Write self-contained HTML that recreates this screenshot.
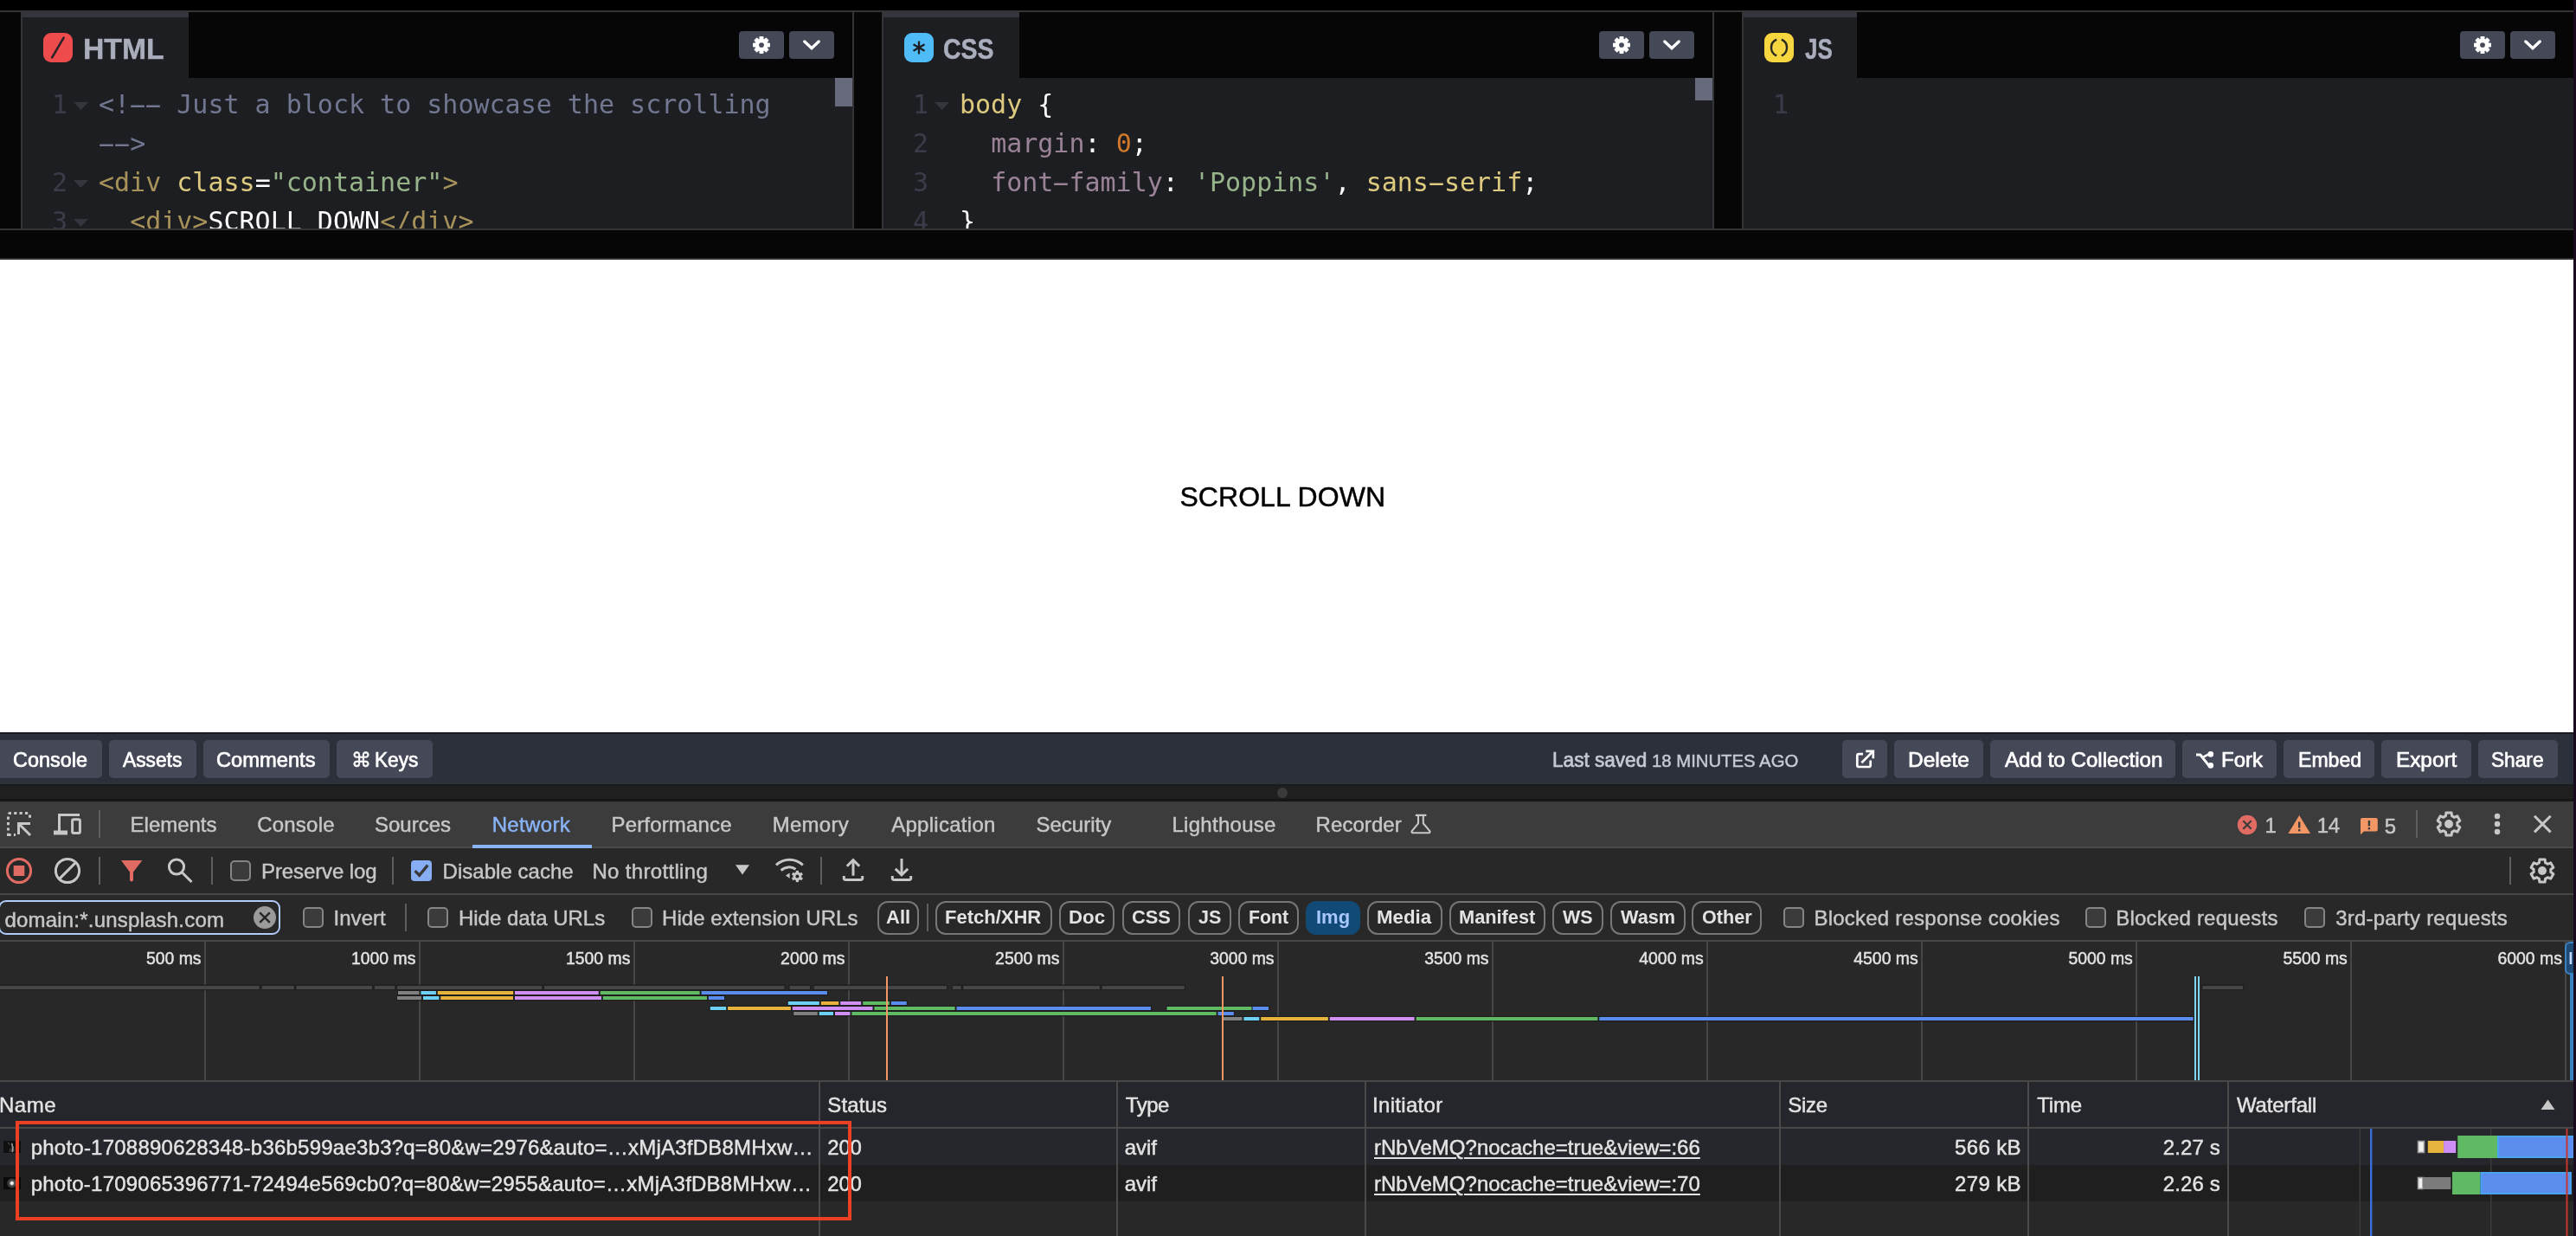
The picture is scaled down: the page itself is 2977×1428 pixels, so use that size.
<!DOCTYPE html>
<html lang="en"><head><meta charset="utf-8"><title>CodePen - Network</title>
<style>

html,body{margin:0;padding:0}
body{width:2977px;height:1428px;position:relative;overflow:hidden;background:#060606;font-family:"Liberation Sans",sans-serif}
#root{position:absolute;left:0;top:0;width:2977px;height:1428px;will-change:transform}
.b{position:absolute}
.t{position:absolute;white-space:pre;line-height:1;-webkit-text-stroke:0.45px}
svg{position:absolute;overflow:visible}
.code{position:absolute;font-family:"DejaVu Sans Mono","Liberation Mono",monospace;font-size:30px;line-height:45px;white-space:pre;color:#fff}
.ln{position:absolute;font-family:"DejaVu Sans Mono","Liberation Mono",monospace;font-size:30px;line-height:45px;color:#3a3d49;text-align:right;width:40px}
.hy{display:inline-block;transform:scaleX(2.05)}
.c-com{color:#717790}.c-tag{color:#a7925a}.c-att{color:#ddca7e}.c-str{color:#96b38a}.c-pro{color:#9a8297}.c-num{color:#d0782a}
.btn{position:absolute;background:#444857;border-radius:4px}
.chip{position:absolute;box-sizing:border-box;border:2px solid #777;border-radius:12px;top:1041px;height:39px}
.cb{position:absolute;box-sizing:border-box;width:24px;height:24px;border:2px solid #858585;border-radius:5px;background:#3b3b3b}

</style></head>
<body>
<div id="root">
<div class="b" style="left:0px;top:0px;width:2977px;height:12px;background:#000;"></div>
<div class="b" style="left:0px;top:12px;width:2974px;height:2px;background:#343436;"></div>
<div class="b" style="left:26px;top:90px;width:959px;height:174px;background:#1d1e22;"></div>
<div class="b" style="left:26px;top:14px;width:192px;height:76px;background:#1d1e22;"></div>
<div class="b" style="left:26px;top:14px;width:192px;height:6px;background:#34363e;"></div>
<div class="b" style="left:50px;top:38px;width:34px;height:34px;background:#ee4c4c;border-radius:9px"></div>
<div class="btn" style="left:912px;top:36px;width:52px;height:32px"></div>
<div class="btn" style="left:854px;top:36px;width:52px;height:32px"></div>
<svg style="left:926px;top:44px" width="24" height="16" viewBox="0 0 24 16"><path d="M3.8 4 L12 11.7 L20.2 4" fill="none" stroke="#fff" stroke-width="3.4" stroke-linecap="round" stroke-linejoin="miter"/></svg>
<svg style="left:869px;top:41px" width="22" height="22" viewBox="-11.5 -11.5 23 23"><g fill="#fff"><rect x="-2.6" y="-10.4" width="5.2" height="6" rx="0.8" transform="rotate(0)"/><rect x="-2.6" y="-10.4" width="5.2" height="6" rx="0.8" transform="rotate(45)"/><rect x="-2.6" y="-10.4" width="5.2" height="6" rx="0.8" transform="rotate(90)"/><rect x="-2.6" y="-10.4" width="5.2" height="6" rx="0.8" transform="rotate(135)"/><rect x="-2.6" y="-10.4" width="5.2" height="6" rx="0.8" transform="rotate(180)"/><rect x="-2.6" y="-10.4" width="5.2" height="6" rx="0.8" transform="rotate(225)"/><rect x="-2.6" y="-10.4" width="5.2" height="6" rx="0.8" transform="rotate(270)"/><rect x="-2.6" y="-10.4" width="5.2" height="6" rx="0.8" transform="rotate(315)"/><circle r="7.6"/></g><circle r="3" fill="#444857"/></svg>
<div class="b" style="left:1021px;top:90px;width:958px;height:174px;background:#1d1e22;"></div>
<div class="b" style="left:1021px;top:14px;width:157px;height:76px;background:#1d1e22;"></div>
<div class="b" style="left:1021px;top:14px;width:157px;height:6px;background:#34363e;"></div>
<div class="b" style="left:1045px;top:38px;width:34px;height:34px;background:#4fbcf7;border-radius:9px"></div>
<div class="btn" style="left:1906px;top:36px;width:52px;height:32px"></div>
<div class="btn" style="left:1848px;top:36px;width:52px;height:32px"></div>
<svg style="left:1920px;top:44px" width="24" height="16" viewBox="0 0 24 16"><path d="M3.8 4 L12 11.7 L20.2 4" fill="none" stroke="#fff" stroke-width="3.4" stroke-linecap="round" stroke-linejoin="miter"/></svg>
<svg style="left:1863px;top:41px" width="22" height="22" viewBox="-11.5 -11.5 23 23"><g fill="#fff"><rect x="-2.6" y="-10.4" width="5.2" height="6" rx="0.8" transform="rotate(0)"/><rect x="-2.6" y="-10.4" width="5.2" height="6" rx="0.8" transform="rotate(45)"/><rect x="-2.6" y="-10.4" width="5.2" height="6" rx="0.8" transform="rotate(90)"/><rect x="-2.6" y="-10.4" width="5.2" height="6" rx="0.8" transform="rotate(135)"/><rect x="-2.6" y="-10.4" width="5.2" height="6" rx="0.8" transform="rotate(180)"/><rect x="-2.6" y="-10.4" width="5.2" height="6" rx="0.8" transform="rotate(225)"/><rect x="-2.6" y="-10.4" width="5.2" height="6" rx="0.8" transform="rotate(270)"/><rect x="-2.6" y="-10.4" width="5.2" height="6" rx="0.8" transform="rotate(315)"/><circle r="7.6"/></g><circle r="3" fill="#444857"/></svg>
<div class="b" style="left:2015px;top:90px;width:959px;height:174px;background:#1d1e22;"></div>
<div class="b" style="left:2015px;top:14px;width:131px;height:76px;background:#1d1e22;"></div>
<div class="b" style="left:2015px;top:14px;width:131px;height:6px;background:#34363e;"></div>
<div class="b" style="left:2039px;top:38px;width:34px;height:34px;background:#f8d640;border-radius:9px"></div>
<div class="btn" style="left:2901px;top:36px;width:52px;height:32px"></div>
<div class="btn" style="left:2843px;top:36px;width:52px;height:32px"></div>
<svg style="left:2915px;top:44px" width="24" height="16" viewBox="0 0 24 16"><path d="M3.8 4 L12 11.7 L20.2 4" fill="none" stroke="#fff" stroke-width="3.4" stroke-linecap="round" stroke-linejoin="miter"/></svg>
<svg style="left:2858px;top:41px" width="22" height="22" viewBox="-11.5 -11.5 23 23"><g fill="#fff"><rect x="-2.6" y="-10.4" width="5.2" height="6" rx="0.8" transform="rotate(0)"/><rect x="-2.6" y="-10.4" width="5.2" height="6" rx="0.8" transform="rotate(45)"/><rect x="-2.6" y="-10.4" width="5.2" height="6" rx="0.8" transform="rotate(90)"/><rect x="-2.6" y="-10.4" width="5.2" height="6" rx="0.8" transform="rotate(135)"/><rect x="-2.6" y="-10.4" width="5.2" height="6" rx="0.8" transform="rotate(180)"/><rect x="-2.6" y="-10.4" width="5.2" height="6" rx="0.8" transform="rotate(225)"/><rect x="-2.6" y="-10.4" width="5.2" height="6" rx="0.8" transform="rotate(270)"/><rect x="-2.6" y="-10.4" width="5.2" height="6" rx="0.8" transform="rotate(315)"/><circle r="7.6"/></g><circle r="3" fill="#444857"/></svg>
<div class="b" style="left:24px;top:14px;width:2px;height:250px;background:#343436;"></div>
<div class="b" style="left:985px;top:14px;width:2px;height:250px;background:#343436;"></div>
<div class="b" style="left:1019px;top:14px;width:2px;height:250px;background:#343436;"></div>
<div class="b" style="left:1979px;top:14px;width:2px;height:250px;background:#343436;"></div>
<div class="b" style="left:2013px;top:14px;width:2px;height:250px;background:#343436;"></div>
<div class="b" style="left:0px;top:264px;width:2974px;height:2px;background:#343436;"></div>
<div class="b" style="left:0px;top:298px;width:2974px;height:2px;background:#2e2e30;"></div>
<div class="b" style="left:965px;top:90px;width:20px;height:33px;background:#666a7c;"></div>
<div class="b" style="left:1959px;top:90px;width:20px;height:26px;background:#666a7c;"></div>
<span class="t" style="left:95.6px;top:39.8px;font-size:33.5px;color:#aaaebc;font-weight:700;transform:scaleX(1.0067);transform-origin:0 0;">HTML</span>
<span class="t" style="left:1089.6px;top:39.8px;font-size:33.5px;color:#aaaebc;font-weight:700;transform:scaleX(0.8507);transform-origin:0 0;">CSS</span>
<span class="t" style="left:2086.0px;top:39.8px;font-size:33.5px;color:#aaaebc;font-weight:700;transform:scaleX(0.7750);transform-origin:0 0;">JS</span>
<svg style="left:50px;top:38px" width="34" height="34" viewBox="0 0 34 34"><path d="M10.2 28.4 L23.6 5.6" stroke="#2a2226" stroke-width="2.6" stroke-linecap="round"/></svg>
<svg style="left:1045px;top:38px" width="34" height="34" viewBox="0 0 34 34"><g stroke="#1d1e22" stroke-width="2.3" stroke-linecap="butt"><path d="M17 9.5V24.5"/><path d="M10.5 13.25L23.5 20.75"/><path d="M23.5 13.25L10.5 20.75"/></g></svg>
<svg style="left:2039px;top:38px" width="34" height="34" viewBox="0 0 34 34"><g fill="none" stroke="#2b2a22" stroke-width="2.4"><path d="M14.2 7.6 A10.2 10.2 0 0 0 14.2 26.4"/><path d="M19.8 7.6 A10.2 10.2 0 0 1 19.8 26.4"/></g></svg>
<div class="b" style="left:26px;top:90px;width:939px;height:174px;overflow:hidden"><div class="code" style="left:88px;top:8px"><span class="c-com">&lt;!<span class="hy">-</span><span class="hy">-</span> Just a block to showcase the scrolling</span></div><div class="code" style="left:88px;top:53px"><span class="c-com"><span class="hy">-</span><span class="hy">-</span>&gt;</span></div><div class="code" style="left:88px;top:98px"><span class="c-tag">&lt;div</span> <span class="c-att">class</span>=<span class="c-str">"container"</span><span class="c-tag">&gt;</span></div><div class="code" style="left:88px;top:143px">  <span class="c-tag">&lt;div&gt;</span>SCROLL DOWN<span class="c-tag">&lt;/div&gt;</span></div><div class="ln" style="left:12px;top:8px">1</div><div class="ln" style="left:12px;top:98px">2</div><div class="ln" style="left:12px;top:143px">3</div><svg style="left:59.2px;top:28.3px" width="17" height="9" viewBox="0 0 17 9"><path d="M0 0H17L8.5 9Z" fill="#34363e"/></svg><svg style="left:59.2px;top:118.3px" width="17" height="9" viewBox="0 0 17 9"><path d="M0 0H17L8.5 9Z" fill="#34363e"/></svg><svg style="left:59.2px;top:163.3px" width="17" height="9" viewBox="0 0 17 9"><path d="M0 0H17L8.5 9Z" fill="#34363e"/></svg></div>
<div class="b" style="left:1021px;top:90px;width:938px;height:174px;overflow:hidden"><div class="code" style="left:88px;top:8px"><span class="c-att">body</span> {</div><div class="code" style="left:88px;top:53px">  <span class="c-pro">margin</span>: <span class="c-num">0</span>;</div><div class="code" style="left:88px;top:98px">  <span class="c-pro">font<span class="hy">-</span>family</span>: <span class="c-str">'Poppins'</span>, <span class="c-att">sans<span class="hy">-</span>serif</span>;</div><div class="code" style="left:88px;top:143px">}</div><div class="ln" style="left:12px;top:8px">1</div><div class="ln" style="left:12px;top:53px">2</div><div class="ln" style="left:12px;top:98px">3</div><div class="ln" style="left:12px;top:143px">4</div><svg style="left:59.2px;top:28.3px" width="17" height="9" viewBox="0 0 17 9"><path d="M0 0H17L8.5 9Z" fill="#34363e"/></svg></div>
<div class="b" style="left:2015px;top:90px;width:959px;height:174px;overflow:hidden"><div class="ln" style="left:12px;top:8px">1</div></div>
<div class="b" style="left:0px;top:300px;width:2974px;height:546px;background:#fff;"></div>
<span class="t" style="left:1363.4px;top:557.9px;font-size:32px;color:#000;letter-spacing:0.060px;">SCROLL DOWN</span>
<div class="b" style="left:0px;top:846px;width:2974px;height:2px;background:#1b1c22;"></div>
<div class="b" style="left:0px;top:848px;width:2974px;height:58px;background:#2c303a;"></div>
<div class="b" style="left:0px;top:906px;width:2974px;height:2px;background:#191a1d;"></div>
<div class="b" style="left:0px;top:908px;width:2974px;height:15px;background:#1f1f1f;"></div>
<div class="b" style="left:0px;top:923px;width:2974px;height:3px;background:#161616;"></div>
<div class="b" style="left:1476px;top:910px;width:12px;height:12px;background:#3a3a3a;border-radius:50%"></div>
<div class="btn" style="left:0px;top:855px;width:118px;height:44px;border-radius:0 5px 5px 0"></div>
<span class="t" style="left:15.3px;top:865.7px;font-size:24px;color:#fff;transform:scaleX(0.9770);transform-origin:0 0;-webkit-text-stroke:0.7px;">Console</span>
<div class="btn" style="left:126px;top:855px;width:101px;height:44px;border-radius:5px"></div>
<span class="t" style="left:142.0px;top:865.7px;font-size:24px;color:#fff;transform:scaleX(0.9486);transform-origin:0 0;-webkit-text-stroke:0.7px;">Assets</span>
<div class="btn" style="left:235px;top:855px;width:146px;height:44px;border-radius:5px"></div>
<span class="t" style="left:250.0px;top:865.7px;font-size:24px;color:#fff;transform:scaleX(0.9870);transform-origin:0 0;-webkit-text-stroke:0.7px;">Comments</span>
<div class="btn" style="left:389px;top:855px;width:111px;height:44px;border-radius:5px"></div>
<div class="btn" style="left:2129px;top:855px;width:52px;height:44px;border-radius:5px"></div>
<div class="btn" style="left:2189px;top:855px;width:103px;height:44px;border-radius:5px"></div>
<span class="t" style="left:2205.3px;top:865.7px;font-size:24px;color:#fff;transform:scaleX(1.0206);transform-origin:0 0;-webkit-text-stroke:0.7px;">Delete</span>
<div class="btn" style="left:2300px;top:855px;width:214px;height:44px;border-radius:5px"></div>
<span class="t" style="left:2317.0px;top:865.7px;font-size:24px;color:#fff;transform:scaleX(1.0056);transform-origin:0 0;-webkit-text-stroke:0.7px;">Add to Collection</span>
<div class="btn" style="left:2522px;top:855px;width:109px;height:44px;border-radius:5px"></div>
<div class="btn" style="left:2639px;top:855px;width:105px;height:44px;border-radius:5px"></div>
<span class="t" style="left:2655.5px;top:865.7px;font-size:24px;color:#fff;transform:scaleX(0.9608);transform-origin:0 0;-webkit-text-stroke:0.7px;">Embed</span>
<div class="btn" style="left:2752px;top:855px;width:104px;height:44px;border-radius:5px"></div>
<span class="t" style="left:2768.5px;top:865.7px;font-size:24px;color:#fff;transform:scaleX(1.0130);transform-origin:0 0;-webkit-text-stroke:0.7px;">Export</span>
<div class="btn" style="left:2864px;top:855px;width:92px;height:44px;border-radius:5px"></div>
<span class="t" style="left:2879.1px;top:865.7px;font-size:24px;color:#fff;transform:scaleX(0.9444);transform-origin:0 0;-webkit-text-stroke:0.7px;">Share</span>
<span class="t" style="left:406.0px;top:867.1px;font-size:23px;color:#fff;font-family:'DejaVu Sans', 'Liberation Sans', sans-serif;">⌘</span>
<span class="t" style="left:433.4px;top:865.7px;font-size:24px;color:#fff;transform:scaleX(0.9423);transform-origin:0 0;-webkit-text-stroke:0.7px;">Keys</span>
<span class="t" style="left:2567.0px;top:865.7px;font-size:24px;color:#fff;-webkit-text-stroke:0.7px;">Fork</span>
<span class="t" style="left:1794.1px;top:865.7px;font-size:24px;color:#c7c9d3;transform:scaleX(0.9412);transform-origin:0 0;-webkit-text-stroke:0.7px;">Last saved</span>
<span class="t" style="left:1909.0px;top:869.1px;font-size:20px;color:#c7c9d3;transform:scaleX(1.0152);transform-origin:0 0;">18 MINUTES AGO</span>
<svg style="left:0;top:0" width="2977" height="1428" viewBox="0 0 2977 1428"><g fill="none" stroke="#fff" stroke-width="2.7"><path d="M2153 871.1 H2148.3 a2 2 0 0 0 -2 2 V884 a2 2 0 0 0 2 2 H2159.7 a2 2 0 0 0 2 -2 V878.5"/><path d="M2151.4 881.2 L2164.2 868.4"/><path d="M2156.3 867.9 H2164.8 V876.2"/><path d="M2538 872 H2542.8 L2552.8 884.6" stroke-width="3" stroke-linejoin="round"/><path d="M2546.3 874.7 L2552.5 871.3" stroke-width="2.6"/></g><circle cx="2554.8" cy="871.4" r="3.3" fill="#fff"/><circle cx="2554.8" cy="884.4" r="3.3" fill="#fff"/></svg>
<div class="b" style="left:0px;top:926px;width:2974px;height:52px;background:#3c3c3c;"></div>
<div class="b" style="left:0px;top:978px;width:2974px;height:2px;background:#494949;"></div>
<div class="b" style="left:0px;top:980px;width:2974px;height:448px;background:#282828;"></div>
<div class="b" style="left:0px;top:1032px;width:2974px;height:2px;background:#474747;"></div>
<div class="b" style="left:0px;top:1086px;width:2974px;height:2px;background:#474747;"></div>
<div class="b" style="left:0px;top:1248px;width:2974px;height:2px;background:#474747;"></div>
<span class="t" style="left:150.6px;top:941.0px;font-size:24px;color:#c7c7c7;letter-spacing:-0.029px;">Elements</span>
<span class="t" style="left:297.2px;top:941.0px;font-size:24px;color:#c7c7c7;letter-spacing:0.217px;">Console</span>
<span class="t" style="left:433.0px;top:941.0px;font-size:24px;color:#c7c7c7;">Sources</span>
<span class="t" style="left:568.7px;top:941.0px;font-size:24px;color:#8ab4f8;letter-spacing:0.350px;">Network</span>
<span class="t" style="left:706.5px;top:941.0px;font-size:24px;color:#c7c7c7;letter-spacing:0.160px;">Performance</span>
<span class="t" style="left:892.8px;top:941.0px;font-size:24px;color:#c7c7c7;letter-spacing:0.240px;">Memory</span>
<span class="t" style="left:1030.2px;top:941.0px;font-size:24px;color:#c7c7c7;letter-spacing:0.280px;">Application</span>
<span class="t" style="left:1197.4px;top:941.0px;font-size:24px;color:#c7c7c7;letter-spacing:0.014px;">Security</span>
<span class="t" style="left:1354.4px;top:941.0px;font-size:24px;color:#c7c7c7;letter-spacing:0.289px;">Lighthouse</span>
<span class="t" style="left:1520.6px;top:941.0px;font-size:24px;color:#c7c7c7;letter-spacing:0.057px;">Recorder</span>
<div class="b" style="left:546px;top:976px;width:138px;height:4px;background:#8ab4f8;"></div>
<span class="t" style="left:2617.6px;top:942.1px;font-size:24px;color:#c7c7c7;">1</span>
<span class="t" style="left:2677.7px;top:942.1px;font-size:24px;color:#c7c7c7;letter-spacing:-0.400px;">14</span>
<span class="t" style="left:2755.7px;top:943.4px;font-size:24px;color:#c7c7c7;">5</span>
<span class="t" style="left:302.0px;top:994.7px;font-size:24px;color:#c7c7c7;letter-spacing:-0.109px;">Preserve log</span>
<span class="t" style="left:511.6px;top:994.7px;font-size:24px;color:#c7c7c7;letter-spacing:0.025px;">Disable cache</span>
<span class="t" style="left:684.4px;top:994.7px;font-size:24px;color:#c7c7c7;letter-spacing:0.333px;">No throttling</span>
<div class="cb" style="left:266px;top:994px"></div>
<div class="cb" style="left:475px;top:994px;background:#87adf2;border-color:#87adf2;border-radius:4px"></div>
<div class="b" style="left:-2px;top:1040px;width:326px;height:40px;box-sizing:border-box;border:2.2px solid #b0ccfd;border-radius:9px;background:#282828"></div>
<span class="t" style="left:5.4px;top:1051.0px;font-size:24px;color:#c7c7c7;letter-spacing:0.205px;">domain:*.unsplash.com</span>
<div class="cb" style="left:350px;top:1048px"></div>
<span class="t" style="left:385.5px;top:1049.2px;font-size:24px;color:#c7c7c7;letter-spacing:0.040px;">Invert</span>
<div class="cb" style="left:494.2px;top:1048px"></div>
<span class="t" style="left:529.9px;top:1049.2px;font-size:24px;color:#c7c7c7;letter-spacing:-0.008px;">Hide data URLs</span>
<div class="cb" style="left:729.8px;top:1048px"></div>
<span class="t" style="left:765.1px;top:1049.2px;font-size:24px;color:#c7c7c7;letter-spacing:0.050px;">Hide extension URLs</span>
<div class="cb" style="left:2061px;top:1048px"></div>
<span class="t" style="left:2096.5px;top:1049.2px;font-size:24px;color:#c7c7c7;letter-spacing:0.222px;">Blocked response cookies</span>
<div class="cb" style="left:2410.4px;top:1048px"></div>
<span class="t" style="left:2445.2px;top:1049.2px;font-size:24px;color:#c7c7c7;letter-spacing:0.207px;">Blocked requests</span>
<div class="cb" style="left:2663px;top:1048px"></div>
<span class="t" style="left:2699.2px;top:1049.2px;font-size:24px;color:#c7c7c7;letter-spacing:0.224px;">3rd-party requests</span>
<div class="chip" style="left:1014.2px;width:48.3px;"></div>
<span class="t" style="left:1024.2px;top:1049.2px;font-size:22.6px;color:#e3e3e3;font-weight:700;transform:scaleX(0.9731);transform-origin:0 0;-webkit-text-stroke:0;">All</span>
<div class="chip" style="left:1080.7px;width:135.3px;"></div>
<span class="t" style="left:1092.0px;top:1049.2px;font-size:22.6px;color:#e3e3e3;font-weight:700;transform:scaleX(0.9735);transform-origin:0 0;-webkit-text-stroke:0;">Fetch/XHR</span>
<div class="chip" style="left:1223.6px;width:64.9px;"></div>
<span class="t" style="left:1235.0px;top:1049.2px;font-size:22.6px;color:#e3e3e3;font-weight:700;transform:scaleX(0.9854);transform-origin:0 0;-webkit-text-stroke:0;">Doc</span>
<div class="chip" style="left:1296.6px;width:67.9px;"></div>
<span class="t" style="left:1308.0px;top:1049.2px;font-size:22.6px;color:#e3e3e3;font-weight:700;transform:scaleX(0.9667);transform-origin:0 0;-webkit-text-stroke:0;">CSS</span>
<div class="chip" style="left:1372.6px;width:50.3px;"></div>
<span class="t" style="left:1385.0px;top:1049.2px;font-size:22.6px;color:#e3e3e3;font-weight:700;transform:scaleX(0.9519);transform-origin:0 0;-webkit-text-stroke:0;">JS</span>
<div class="chip" style="left:1430.5px;width:70.8px;"></div>
<span class="t" style="left:1442.8px;top:1049.2px;font-size:22.6px;color:#e3e3e3;font-weight:700;transform:scaleX(0.9437);transform-origin:0 0;-webkit-text-stroke:0;">Font</span>
<div class="chip" style="left:1508.5px;width:63.8px;background:#124a76;border-color:#124a76"></div>
<span class="t" style="left:1521.0px;top:1049.2px;font-size:22.6px;color:#a8c7fa;font-weight:700;transform:scaleX(0.9737);transform-origin:0 0;-webkit-text-stroke:0;">Img</span>
<div class="chip" style="left:1579.6px;width:87.4px;"></div>
<span class="t" style="left:1591.0px;top:1049.2px;font-size:22.6px;color:#e3e3e3;font-weight:700;transform:scaleX(0.9841);transform-origin:0 0;-webkit-text-stroke:0;">Media</span>
<div class="chip" style="left:1674.7px;width:111.1px;"></div>
<span class="t" style="left:1686.0px;top:1049.2px;font-size:22.6px;color:#e3e3e3;font-weight:700;transform:scaleX(0.9633);transform-origin:0 0;-webkit-text-stroke:0;">Manifest</span>
<div class="chip" style="left:1793.5px;width:59.0px;"></div>
<span class="t" style="left:1806.3px;top:1049.2px;font-size:22.6px;color:#e3e3e3;font-weight:700;transform:scaleX(0.9500);transform-origin:0 0;-webkit-text-stroke:0;">WS</span>
<div class="chip" style="left:1860.6px;width:87.1px;"></div>
<span class="t" style="left:1873.4px;top:1049.2px;font-size:22.6px;color:#e3e3e3;font-weight:700;transform:scaleX(0.9594);transform-origin:0 0;-webkit-text-stroke:0;">Wasm</span>
<div class="chip" style="left:1955.2px;width:81.3px;"></div>
<span class="t" style="left:1967.0px;top:1049.2px;font-size:22.6px;color:#e3e3e3;font-weight:700;transform:scaleX(0.9559);transform-origin:0 0;-webkit-text-stroke:0;">Other</span>
<div class="b" style="left:236px;top:1088px;width:2px;height:160px;background:#464646;"></div>
<span class="t" style="left:168.9px;top:1098.2px;font-size:19.4px;color:#e3e3e3;">500 ms</span>
<div class="b" style="left:484px;top:1088px;width:2px;height:160px;background:#464646;"></div>
<span class="t" style="left:406.0px;top:1098.2px;font-size:19.4px;color:#e3e3e3;">1000 ms</span>
<div class="b" style="left:732px;top:1088px;width:2px;height:160px;background:#464646;"></div>
<span class="t" style="left:654.0px;top:1098.2px;font-size:19.4px;color:#e3e3e3;">1500 ms</span>
<div class="b" style="left:980px;top:1088px;width:2px;height:160px;background:#464646;"></div>
<span class="t" style="left:902.1px;top:1098.2px;font-size:19.4px;color:#e3e3e3;">2000 ms</span>
<div class="b" style="left:1228px;top:1088px;width:2px;height:160px;background:#464646;"></div>
<span class="t" style="left:1150.1px;top:1098.2px;font-size:19.4px;color:#e3e3e3;">2500 ms</span>
<div class="b" style="left:1476px;top:1088px;width:2px;height:160px;background:#464646;"></div>
<span class="t" style="left:1398.2px;top:1098.2px;font-size:19.4px;color:#e3e3e3;">3000 ms</span>
<div class="b" style="left:1724px;top:1088px;width:2px;height:160px;background:#464646;"></div>
<span class="t" style="left:1646.2px;top:1098.2px;font-size:19.4px;color:#e3e3e3;">3500 ms</span>
<div class="b" style="left:1972px;top:1088px;width:2px;height:160px;background:#464646;"></div>
<span class="t" style="left:1894.3px;top:1098.2px;font-size:19.4px;color:#e3e3e3;">4000 ms</span>
<div class="b" style="left:2220px;top:1088px;width:2px;height:160px;background:#464646;"></div>
<span class="t" style="left:2142.3px;top:1098.2px;font-size:19.4px;color:#e3e3e3;">4500 ms</span>
<div class="b" style="left:2468px;top:1088px;width:2px;height:160px;background:#464646;"></div>
<span class="t" style="left:2390.4px;top:1098.2px;font-size:19.4px;color:#e3e3e3;">5000 ms</span>
<div class="b" style="left:2716px;top:1088px;width:2px;height:160px;background:#464646;"></div>
<span class="t" style="left:2638.4px;top:1098.2px;font-size:19.4px;color:#e3e3e3;">5500 ms</span>
<div class="b" style="left:2964px;top:1088px;width:2px;height:160px;background:#464646;"></div>
<span class="t" style="left:2886.5px;top:1098.2px;font-size:19.4px;color:#e3e3e3;">6000 ms</span>
<div class="b" style="left:0px;top:1250px;width:2974px;height:52px;background:#25262b;"></div>
<div class="b" style="left:0px;top:1302px;width:2974px;height:2px;background:#474747;"></div>
<div class="b" style="left:0px;top:1304px;width:2974px;height:42px;background:#26272c;"></div>
<div class="b" style="left:0px;top:1346px;width:2974px;height:42px;background:#1f1f1f;"></div>
<div class="b" style="left:946px;top:1250px;width:2px;height:178px;background:#4a4a4a;"></div>
<div class="b" style="left:1290px;top:1250px;width:2px;height:178px;background:#4a4a4a;"></div>
<div class="b" style="left:1577px;top:1250px;width:2px;height:178px;background:#4a4a4a;"></div>
<div class="b" style="left:2056px;top:1250px;width:2px;height:178px;background:#4a4a4a;"></div>
<div class="b" style="left:2343px;top:1250px;width:2px;height:178px;background:#4a4a4a;"></div>
<div class="b" style="left:2574px;top:1250px;width:2px;height:178px;background:#4a4a4a;"></div>
<span class="t" style="left:-1.0px;top:1264.7px;font-size:24px;color:#e3e3e3;letter-spacing:0.500px;">Name</span>
<span class="t" style="left:956.3px;top:1264.7px;font-size:24px;color:#e3e3e3;letter-spacing:0.140px;">Status</span>
<span class="t" style="left:1300.8px;top:1264.7px;font-size:24px;color:#e3e3e3;letter-spacing:-0.500px;">Type</span>
<span class="t" style="left:1586.0px;top:1264.7px;font-size:24px;color:#e3e3e3;letter-spacing:0.312px;">Initiator</span>
<span class="t" style="left:2066.3px;top:1264.7px;font-size:24px;color:#e3e3e3;letter-spacing:-0.333px;">Size</span>
<span class="t" style="left:2354.2px;top:1264.7px;font-size:24px;color:#e3e3e3;letter-spacing:-0.200px;">Time</span>
<span class="t" style="left:2585.0px;top:1264.7px;font-size:24px;color:#e3e3e3;letter-spacing:-0.188px;">Waterfall</span>
<span class="t" style="left:35.7px;top:1313.7px;font-size:24px;color:#e3e3e3;letter-spacing:0.228px;">photo-1708890628348-b36b599ae3b3?q=80&amp;w=2976&amp;auto=…xMjA3fDB8MHxw…</span>
<span class="t" style="left:956.3px;top:1313.7px;font-size:24px;color:#e3e3e3;letter-spacing:-0.200px;">200</span>
<span class="t" style="left:1299.8px;top:1313.7px;font-size:24px;color:#e3e3e3;letter-spacing:-0.100px;">avif</span>
<span class="t" style="left:1588.0px;top:1313.7px;font-size:24px;color:#e3e3e3;letter-spacing:0.021px;text-decoration:underline;text-decoration-thickness:2px;text-underline-offset:3px;">rNbVeMQ?nocache=true&amp;view=:66</span>
<span class="t" style="left:2259.0px;top:1313.7px;font-size:24px;color:#e3e3e3;letter-spacing:0.380px;">566 kB</span>
<span class="t" style="left:2499.7px;top:1313.7px;font-size:24px;color:#e3e3e3;letter-spacing:0.160px;">2.27 s</span>
<span class="t" style="left:35.7px;top:1355.7px;font-size:24px;color:#e3e3e3;letter-spacing:0.223px;">photo-1709065396771-72494e569cb0?q=80&amp;w=2955&amp;auto=…xMjA3fDB8MHxw…</span>
<span class="t" style="left:956.3px;top:1355.7px;font-size:24px;color:#e3e3e3;letter-spacing:-0.200px;">200</span>
<span class="t" style="left:1299.8px;top:1355.7px;font-size:24px;color:#e3e3e3;letter-spacing:-0.100px;">avif</span>
<span class="t" style="left:1588.0px;top:1355.7px;font-size:24px;color:#e3e3e3;letter-spacing:0.021px;text-decoration:underline;text-decoration-thickness:2px;text-underline-offset:3px;">rNbVeMQ?nocache=true&amp;view=:70</span>
<span class="t" style="left:2259.0px;top:1355.7px;font-size:24px;color:#e3e3e3;letter-spacing:0.380px;">279 kB</span>
<span class="t" style="left:2499.7px;top:1355.7px;font-size:24px;color:#e3e3e3;letter-spacing:0.160px;">2.26 s</span>
<svg style="left:0;top:0" width="2977" height="1428" viewBox="0 0 2977 1428"><rect x="-1.2" y="1137.6" width="302.1" height="6.6" fill="#1f1f1f"/><rect x="301.6" y="1137.6" width="39.3" height="6.6" fill="#1f1f1f"/><rect x="341.2" y="1137.6" width="90.0" height="6.6" fill="#1f1f1f"/><rect x="431.6" y="1137.6" width="25.9" height="6.6" fill="#1f1f1f"/><rect x="457.8" y="1137.6" width="169.7" height="6.6" fill="#1f1f1f"/><rect x="627.8" y="1137.6" width="280.0" height="6.6" fill="#1f1f1f"/><rect x="911.4" y="1137.6" width="25.7" height="6.6" fill="#1f1f1f"/><rect x="939.4" y="1137.6" width="155.7" height="6.6" fill="#1f1f1f"/><rect x="1099.7" y="1137.6" width="12.1" height="6.6" fill="#1f1f1f"/><rect x="1112.1" y="1137.6" width="160.0" height="6.6" fill="#1f1f1f"/><rect x="1272.4" y="1137.6" width="97.5" height="6.6" fill="#1f1f1f"/><rect x="2544.3" y="1137.6" width="48.9" height="6.6" fill="#1f1f1f"/><rect x="458.8" y="1143.8" width="26.9" height="6.4" fill="#1f1f1f"/><rect x="485.2" y="1143.8" width="19.9" height="6.4" fill="#1f1f1f"/><rect x="504.6" y="1143.8" width="89.8" height="6.4" fill="#1f1f1f"/><rect x="593.8" y="1143.8" width="99.2" height="6.4" fill="#1f1f1f"/><rect x="692.5" y="1143.8" width="117.3" height="6.4" fill="#1f1f1f"/><rect x="809.4" y="1143.8" width="147.7" height="6.4" fill="#1f1f1f"/><rect x="457.8" y="1149.8" width="30.4" height="6.4" fill="#1f1f1f"/><rect x="487.8" y="1149.8" width="20.8" height="6.4" fill="#1f1f1f"/><rect x="508.1" y="1149.8" width="86.1" height="6.4" fill="#1f1f1f"/><rect x="593.8" y="1149.8" width="102.4" height="6.4" fill="#1f1f1f"/><rect x="695.6" y="1149.8" width="122.6" height="6.4" fill="#1f1f1f"/><rect x="817.6" y="1149.8" width="20.6" height="6.4" fill="#1f1f1f"/><rect x="909.6" y="1155.8" width="38.4" height="6.4" fill="#1f1f1f"/><rect x="947.6" y="1155.8" width="22.9" height="6.4" fill="#1f1f1f"/><rect x="970.0" y="1155.8" width="26.4" height="6.4" fill="#1f1f1f"/><rect x="996.0" y="1155.8" width="33.1" height="6.4" fill="#1f1f1f"/><rect x="1028.6" y="1155.8" width="20.3" height="6.4" fill="#1f1f1f"/><rect x="819.6" y="1161.8" width="20.8" height="6.4" fill="#1f1f1f"/><rect x="839.9" y="1161.8" width="75.2" height="6.4" fill="#1f1f1f"/><rect x="914.6" y="1161.8" width="95.1" height="6.4" fill="#1f1f1f"/><rect x="1009.2" y="1161.8" width="95.6" height="6.4" fill="#1f1f1f"/><rect x="1104.3" y="1161.8" width="226.8" height="6.4" fill="#1f1f1f"/><rect x="1347.3" y="1161.8" width="100.3" height="6.4" fill="#1f1f1f"/><rect x="1446.3" y="1161.8" width="21.0" height="6.4" fill="#1f1f1f"/><rect x="916.0" y="1167.8" width="30.0" height="6.4" fill="#1f1f1f"/><rect x="945.5" y="1167.8" width="18.7" height="6.4" fill="#1f1f1f"/><rect x="963.8" y="1167.8" width="19.9" height="6.4" fill="#1f1f1f"/><rect x="983.2" y="1167.8" width="423.6" height="6.4" fill="#1f1f1f"/><rect x="1406.3" y="1167.8" width="20.7" height="6.4" fill="#1f1f1f"/><rect x="1412.2" y="1173.8" width="24.5" height="6.4" fill="#1f1f1f"/><rect x="1436.2" y="1173.8" width="20.3" height="6.4" fill="#1f1f1f"/><rect x="1456.0" y="1173.8" width="80.1" height="6.4" fill="#1f1f1f"/><rect x="1535.6" y="1173.8" width="100.2" height="6.4" fill="#1f1f1f"/><rect x="1635.4" y="1173.8" width="212.2" height="6.4" fill="#1f1f1f"/><rect x="1847.1" y="1173.8" width="688.7" height="6.4" fill="#1f1f1f"/><rect x="0.0" y="1139" width="299.7" height="4" fill="#454747"/><rect x="302.8" y="1139" width="36.9" height="4" fill="#454747"/><rect x="342.4" y="1139" width="87.6" height="4" fill="#454747"/><rect x="432.8" y="1139" width="23.5" height="4" fill="#454747"/><rect x="459.0" y="1139" width="167.3" height="4" fill="#454747"/><rect x="629.0" y="1139" width="277.6" height="4" fill="#454747"/><rect x="912.6" y="1139" width="23.3" height="4" fill="#454747"/><rect x="940.6" y="1139" width="153.3" height="4" fill="#454747"/><rect x="1100.9" y="1139" width="9.7" height="4" fill="#454747"/><rect x="1113.3" y="1139" width="157.6" height="4" fill="#454747"/><rect x="1273.6" y="1139" width="95.1" height="4" fill="#454747"/><rect x="2545.5" y="1139" width="46.5" height="4" fill="#454747"/><rect x="460.0" y="1145" width="24.5" height="4" fill="#808080"/><rect x="486.4" y="1145" width="17.5" height="4" fill="#6fd0f5"/><rect x="505.8" y="1145" width="87.4" height="4" fill="#e6b43c"/><rect x="595.0" y="1145" width="96.8" height="4" fill="#cf8ff7"/><rect x="693.7" y="1145" width="114.9" height="4" fill="#5fba63"/><rect x="810.6" y="1145" width="145.3" height="4" fill="#5b8def"/><rect x="459.0" y="1151" width="28.0" height="4" fill="#808080"/><rect x="489.0" y="1151" width="18.4" height="4" fill="#6fd0f5"/><rect x="509.3" y="1151" width="83.7" height="4" fill="#e6b43c"/><rect x="595.0" y="1151" width="100.0" height="4" fill="#cf8ff7"/><rect x="696.8" y="1151" width="120.2" height="4" fill="#5fba63"/><rect x="818.8" y="1151" width="18.2" height="4" fill="#5b8def"/><rect x="910.8" y="1157" width="36.0" height="4" fill="#6fd0f5"/><rect x="948.8" y="1157" width="20.5" height="4" fill="#e6b43c"/><rect x="971.2" y="1157" width="24.0" height="4" fill="#cf8ff7"/><rect x="997.2" y="1157" width="30.7" height="4" fill="#5fba63"/><rect x="1029.8" y="1157" width="17.9" height="4" fill="#5b8def"/><rect x="820.8" y="1163" width="18.4" height="4" fill="#6fd0f5"/><rect x="841.1" y="1163" width="72.8" height="4" fill="#e6b43c"/><rect x="915.8" y="1163" width="92.7" height="4" fill="#cf8ff7"/><rect x="1010.4" y="1163" width="93.2" height="4" fill="#5fba63"/><rect x="1105.5" y="1163" width="224.4" height="4" fill="#5b8def"/><rect x="1348.5" y="1163" width="97.9" height="4" fill="#5fba63"/><rect x="1447.5" y="1163" width="18.6" height="4" fill="#5b8def"/><rect x="917.2" y="1169" width="27.6" height="4" fill="#808080"/><rect x="946.7" y="1169" width="16.3" height="4" fill="#6fd0f5"/><rect x="965.0" y="1169" width="17.5" height="4" fill="#cf8ff7"/><rect x="984.4" y="1169" width="421.2" height="4" fill="#5fba63"/><rect x="1407.5" y="1169" width="18.3" height="4" fill="#5b8def"/><rect x="1413.4" y="1175" width="22.1" height="4" fill="#808080"/><rect x="1437.4" y="1175" width="17.9" height="4" fill="#6fd0f5"/><rect x="1457.2" y="1175" width="77.7" height="4" fill="#e6b43c"/><rect x="1536.8" y="1175" width="97.8" height="4" fill="#cf8ff7"/><rect x="1636.6" y="1175" width="209.8" height="4" fill="#5fba63"/><rect x="1848.3" y="1175" width="686.3" height="4" fill="#5b8def"/><rect x="1024" y="1128" width="2" height="120" fill="#f29765"/><rect x="1412" y="1128" width="2" height="120" fill="#f29765"/><rect x="2536" y="1128" width="2" height="120" fill="#7fd6f7"/><rect x="2540" y="1128" width="2" height="120" fill="#7fd6f7"/><rect x="2970" y="1110" width="4" height="138" fill="#3b80c0"/><rect x="2965" y="1089" width="14" height="36" rx="5" fill="#1f4a76" stroke="#3b80c0" stroke-width="2"/><rect x="2969.6" y="1100" width="2.6" height="14" fill="#c2d6ff"/><rect x="2726.5" y="1304" width="1.5" height="124" fill="#3a3a3a"/><rect x="2878" y="1304" width="1.5" height="124" fill="#3a3a3a"/><rect x="2739" y="1304" width="2.4" height="124" fill="#3a6fd9"/><rect x="2794.5" y="1318.5" width="7" height="13" fill="#f1f1f1" stroke="#9a9a9a" stroke-width="1.6"/><rect x="2805.8" y="1318" width="18.3" height="14" fill="#e6b43c"/><rect x="2824.1" y="1318" width="14.1" height="14" fill="#cf8ff7"/><rect x="2840.2" y="1312" width="45.8" height="26" fill="#5fba63"/><rect x="2887" y="1313" width="90" height="24" fill="#5b8def" stroke="#4aa3f0" stroke-width="2"/><rect x="2794.5" y="1360.5" width="5.5" height="13" fill="#f1f1f1" stroke="#9a9a9a" stroke-width="1.6"/><rect x="2800.5" y="1360" width="31.8" height="14" fill="#7b7b7b"/><rect x="2834.0" y="1354" width="32.4" height="26" fill="#5fba63"/><rect x="2867.4" y="1355" width="103.5" height="24" fill="#5b8def" stroke="#4aa3f0" stroke-width="2"/><rect x="2965.5" y="1304" width="2" height="124" fill="#c5362d"/><path d="M2936.5 1282 L2952.5 1282 L2944.5 1270.5 Z" fill="#c7c7c7"/><defs><radialGradient id="glow"><stop offset="0" stop-color="#fff"/><stop offset="0.22" stop-color="#e8e8e8"/><stop offset="0.42" stop-color="#555"/><stop offset="0.7" stop-color="#3a3a3a"/><stop offset="0.85" stop-color="#1c1c1c"/><stop offset="1" stop-color="#0a0a0a"/></radialGradient><filter id="bl" x="-50%" y="-50%" width="200%" height="200%"><feGaussianBlur stdDeviation="0.7"/></filter></defs><rect x="4" y="1318" width="20" height="14" fill="#101010"/><g filter="url(#bl)" fill="none" stroke-linecap="round"><path d="M13.8 1321.5 L14.6 1325.5 L14.2 1330.5" stroke="#9a9a9a" stroke-width="1.6"/><path d="M15.4 1325 L15.8 1330" stroke="#6e6e6e" stroke-width="1.2"/><path d="M9.5 1320 L11 1322.5" stroke="#555" stroke-width="1"/><path d="M12 1327 L11.5 1330.5" stroke="#4a4a4a" stroke-width="1.2"/></g><rect x="4" y="1360" width="20" height="14" fill="#0a0a0a"/><circle cx="13.8" cy="1367" r="6.6" fill="url(#glow)"/><rect x="20" y="1297" width="962" height="111" fill="none" stroke="#ec3f24" stroke-width="4"/><rect x="114" y="936" width="2" height="32" fill="#5e5e5e"/><rect x="114" y="990" width="2" height="32" fill="#5e5e5e"/><rect x="244" y="990" width="2" height="32" fill="#5e5e5e"/><rect x="453" y="990" width="2" height="32" fill="#5e5e5e"/><rect x="948" y="990" width="2" height="32" fill="#5e5e5e"/><rect x="2900" y="990" width="2" height="32" fill="#5e5e5e"/><rect x="2792" y="936" width="2" height="32" fill="#5e5e5e"/><rect x="468" y="1044" width="2" height="32" fill="#5e5e5e"/><rect x="1071" y="1044" width="2" height="32" fill="#5e5e5e"/><g fill="none" stroke="#c7c7c7" stroke-width="3"><path d="M9.5 966 V941.5 a2 2 0 0 1 2-2 H32.5 a2 2 0 0 1 2 2 V947.6" stroke-dasharray="3.2 3.2"/><path d="M9.5 964.5 H18" stroke-dasharray="3.2 3.2"/><path d="M21.5 964 V951.5 H35"/><path d="M22 952 L35 965"/></g><g fill="none" stroke="#c7c7c7" stroke-width="3"><path d="M68.5 960 V941.5 H92"/><rect x="83.6" y="946.8" width="8.8" height="15.7" rx="1.5"/></g><rect x="62" y="959.5" width="16" height="5" fill="#c7c7c7"/><circle cx="22" cy="1006" r="13.6" fill="none" stroke="#e06b63" stroke-width="3"/><rect x="15.7" y="1000" width="12.6" height="12" fill="#e06b63"/><g fill="none" stroke="#c7c7c7" stroke-width="3"><circle cx="78" cy="1006" r="13.6"/><path d="M68.4 1015.6 L87.6 996.4"/></g><path d="M140 994 H164.4 L154 1007.5 V1016.5 a2 2 0 0 1 -4 0 V1007.5 Z" fill="#e06b63"/><g fill="none" stroke="#c7c7c7" stroke-width="3"><circle cx="204" cy="1001.5" r="8.6"/><path d="M210.2 1007.8 L221.5 1019"/></g><path d="M479.6 1006.2 L484.6 1011.2 L494.3 999.6" fill="none" stroke="#383838" stroke-width="3.3"/><path d="M850 999.3 H866 L858 1010.6 Z" fill="#c7c7c7"/><g fill="none" stroke="#c7c7c7" stroke-width="3" stroke-linecap="butt"><path d="M897 999.5 A22 22 0 0 1 927.8 999.5"/><path d="M902.6 1005.6 A13.5 13.5 0 0 1 919.5 1004.2"/></g><path d="M908 1011.5 L912.6 1008.6 V1014.8 Z" fill="#c7c7c7"/><g transform="translate(921.4 1012.5)" fill="#c7c7c7"><rect x="-1.6" y="-6.6" width="3.2" height="4" transform="rotate(0)"/><rect x="-1.6" y="-6.6" width="3.2" height="4" transform="rotate(60)"/><rect x="-1.6" y="-6.6" width="3.2" height="4" transform="rotate(120)"/><rect x="-1.6" y="-6.6" width="3.2" height="4" transform="rotate(180)"/><rect x="-1.6" y="-6.6" width="3.2" height="4" transform="rotate(240)"/><rect x="-1.6" y="-6.6" width="3.2" height="4" transform="rotate(300)"/><circle r="4.9"/><circle r="2" fill="#282828"/></g><g fill="none" stroke="#c7c7c7" stroke-width="3"><path d="M986 1011.7 V994"/><path d="M978.8 1000.8 L986 993.6 L993.2 1000.8"/><path d="M975.3 1012 V1014.5 a2 2 0 0 0 2 2 H994.7 a2 2 0 0 0 2-2 V1012"/><path d="M1042 992 V1010"/><path d="M1034.8 1003.7 L1042 1010.9 L1049.2 1003.7"/><path d="M1031.3 1012 V1014.5 a2 2 0 0 0 2 2 H1050.7 a2 2 0 0 0 2-2 V1012"/></g><path d="M2826.42 942.77 L2826.88 938.97 L2833.12 938.97 L2833.58 942.77 A9.9 9.9 0 0 1 2836.20 944.28 L2839.73 942.78 L2842.85 948.19 L2839.78 950.49 A9.9 9.9 0 0 1 2839.78 953.51 L2842.85 955.81 L2839.73 961.22 L2836.20 959.72 A9.9 9.9 0 0 1 2833.58 961.23 L2833.12 965.03 L2826.88 965.03 L2826.42 961.23 A9.9 9.9 0 0 1 2823.80 959.72 L2820.27 961.22 L2817.15 955.81 L2820.22 953.51 A9.9 9.9 0 0 1 2820.22 950.49 L2817.15 948.19 L2820.27 942.78 L2823.80 944.28 A9.9 9.9 0 0 1 2826.42 942.77Z" fill="none" stroke="#c7c7c7" stroke-width="3" stroke-linejoin="round"/><circle cx="2830" cy="952" r="5" fill="#c7c7c7"/><path d="M2934.42 996.77 L2934.88 992.97 L2941.12 992.97 L2941.58 996.77 A9.9 9.9 0 0 1 2944.20 998.28 L2947.73 996.78 L2950.85 1002.19 L2947.78 1004.49 A9.9 9.9 0 0 1 2947.78 1007.51 L2950.85 1009.81 L2947.73 1015.22 L2944.20 1013.72 A9.9 9.9 0 0 1 2941.58 1015.23 L2941.12 1019.03 L2934.88 1019.03 L2934.42 1015.23 A9.9 9.9 0 0 1 2931.80 1013.72 L2928.27 1015.22 L2925.15 1009.81 L2928.22 1007.51 A9.9 9.9 0 0 1 2928.22 1004.49 L2925.15 1002.19 L2928.27 996.78 L2931.80 998.28 A9.9 9.9 0 0 1 2934.42 996.77Z" fill="none" stroke="#c7c7c7" stroke-width="3" stroke-linejoin="round"/><circle cx="2938" cy="1006" r="5" fill="#c7c7c7"/><circle cx="2886" cy="943" r="3.25" fill="#c7c7c7"/><circle cx="2886" cy="952" r="3.25" fill="#c7c7c7"/><circle cx="2886" cy="961" r="3.25" fill="#c7c7c7"/><path d="M2929 942.8 L2947.6 961.4 M2947.6 942.8 L2929 961.4" stroke="#c7c7c7" stroke-width="3" fill="none"/><circle cx="2597" cy="953" r="11.2" fill="#e06b63"/><path d="M2592.3 948.3 L2601.7 957.7 M2601.7 948.3 L2592.3 957.7" stroke="#3c3c3c" stroke-width="2.2"/><path d="M2657.2 942 L2670 963 H2644.4 Z" fill="#f29765"/><rect x="2656" y="949.5" width="2.4" height="7" fill="#3c3c3c"/><rect x="2656" y="958" width="2.4" height="2.4" fill="#3c3c3c"/><path d="M2728 947 a2 2 0 0 1 2-2 H2745.8 a2 2 0 0 1 2 2 V958.5 a2 2 0 0 1 -2 2 H2732 L2728 964.3 Z" fill="#f29765"/><rect x="2736.7" y="948" width="2.4" height="6.5" fill="#3c3c3c"/><rect x="2736.7" y="956" width="2.4" height="2.4" fill="#3c3c3c"/><path d="M1635.8 941.9 H1648.4 M1639 942.5 V951.3 L1631.7 960.1 a1.3 1.3 0 0 0 1 2.1 H1651.3 a1.3 1.3 0 0 0 1 -2.1 L1644.8 951.3 V942.5" fill="none" stroke="#c7c7c7" stroke-width="2.1" stroke-linejoin="round"/><circle cx="306" cy="1060.1" r="13" fill="#9a9a9a"/><path d="M300.2 1054.3 L311.8 1065.9 M311.8 1054.3 L300.2 1065.9" stroke="#262626" stroke-width="2.4"/></svg>
<div class="b" style="left:2974px;top:0px;width:3px;height:1428px;background:#170b1d;"></div>
</div>
</body></html>
